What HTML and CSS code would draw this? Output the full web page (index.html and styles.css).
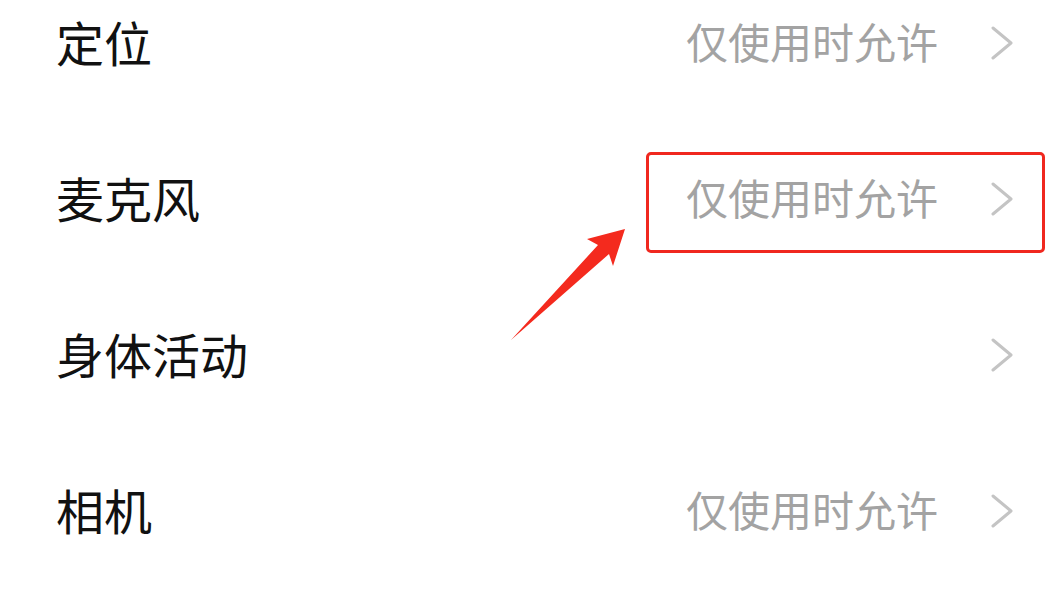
FILE: index.html
```html
<!DOCTYPE html>
<html lang="zh-CN">
<head>
<meta charset="utf-8">
<link rel="stylesheet" href="styles.css">
</head>
<body>
<div class="page">
  <ul class="list">
    <li class="row"><span class="label">定位</span><span class="value">仅使用时允许</span><svg class="chev" viewBox="0 0 24 34"><path d="M3 2 L21 17 L3 32" fill="none" stroke="#c4c4c4" stroke-width="3" stroke-linecap="round" stroke-linejoin="round"/></svg></li>
    <li class="row"><span class="label">麦克风</span><span class="value">仅使用时允许</span><svg class="chev" viewBox="0 0 24 34"><path d="M3 2 L21 17 L3 32" fill="none" stroke="#c4c4c4" stroke-width="3" stroke-linecap="round" stroke-linejoin="round"/></svg></li>
    <li class="row"><span class="label">身体活动</span><span class="value"></span><svg class="chev" viewBox="0 0 24 34"><path d="M3 2 L21 17 L3 32" fill="none" stroke="#c4c4c4" stroke-width="3" stroke-linecap="round" stroke-linejoin="round"/></svg></li>
    <li class="row"><span class="label">相机</span><span class="value">仅使用时允许</span><svg class="chev" viewBox="0 0 24 34"><path d="M3 2 L21 17 L3 32" fill="none" stroke="#c4c4c4" stroke-width="3" stroke-linecap="round" stroke-linejoin="round"/></svg></li>
  </ul>
  <div class="highlight"></div>
  <svg class="arrow" viewBox="0 0 1056 594"><polygon points="625,229 587,239 598,245 511,340 609,254 613,266" fill="#f42a1e"/></svg>
</div>
</body>
</html>
```
FILE: styles.css
```css
html, body {
  margin: 0;
  padding: 0;
  background: #ffffff;
}
.page {
  position: relative;
  width: 1056px;
  height: 594px;
  overflow: hidden;
  font-family: "Noto Sans CJK SC", "Noto Sans", sans-serif;
}
.list {
  list-style: none;
  margin: -37px 0 0 0;
  padding: 0;
}
.row {
  display: flex;
  align-items: center;
  height: 156px;
  padding: 0 42px 0 56px;
}
.label {
  flex: 1;
  font-size: 48px;
  color: #111111;
  line-height: 1;
}
.value {
  font-size: 42px;
  color: #a3a3a3;
  line-height: 1;
  margin-right: 52px;
}
.chev {
  width: 24px;
  height: 34px;
  display: block;
  position: relative;
  top: 2px;
}
.highlight {
  position: absolute;
  left: 646px;
  top: 152px;
  width: 393px;
  height: 95px;
  border: 3px solid #f0281f;
  border-radius: 5px;
}
.arrow {
  position: absolute;
  left: 0;
  top: 0;
  width: 1056px;
  height: 594px;
}
```
